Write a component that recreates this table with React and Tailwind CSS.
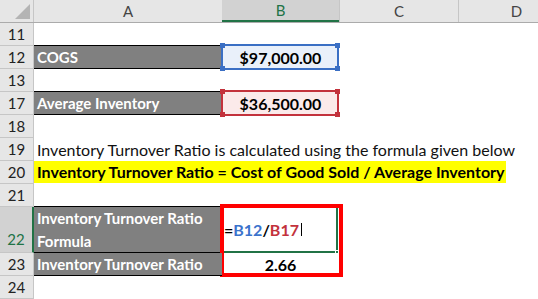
import React from "react";

const GRAY = "bg-[#808080] text-white font-bold";

function Row({ n, tall, active, children }) {
  return (
    <div className={tall ? "flex h-[46px]" : "flex h-[23px]"}>
      <div
        className={
          active
            ? "w-[34px] shrink-0 flex items-end justify-center pb-[1px] bg-[#d2d2d2] border-b border-b-[#c6c6c6] border-r-2 border-r-[#217346] text-[#217346]"
            : "w-[34px] shrink-0 flex items-center justify-center bg-[#e6e6e6] border-b border-r border-[#c6c6c6] text-[#222]"
        }
      >
        {n}
      </div>
      <div className="flex flex-1 relative">{children}</div>
    </div>
  );
}

function Corners({ color }) {
  return (
    <>
      <span className={`absolute -left-[3px] -top-[3px] w-[5px] h-[5px] ${color}`} />
      <span className={`absolute -right-[3px] -top-[3px] w-[5px] h-[5px] ${color}`} />
      <span className={`absolute -left-[3px] -bottom-[3px] w-[5px] h-[5px] ${color}`} />
      <span className={`absolute -right-[3px] -bottom-[3px] w-[5px] h-[5px] ${color}`} />
    </>
  );
}

export default function App() {
  return (
    <div className="w-[538px] h-[299px] overflow-hidden bg-white text-[15px] leading-[23px] font-['Lato','Open_Sans',sans-serif] text-black">
      {/* column headers */}
      <div className="flex h-[23px] bg-[#e6e6e6] border-b border-[#ababab] text-[#444]">
        <div className="w-[34px] shrink-0 relative border-r border-[#c6c6c6]">
          <svg className="absolute left-0 top-0" width="33" height="22" viewBox="0 0 33 22">
            <polygon points="30,4 30,19 15,19" fill="#b4b4b4" />
          </svg>
        </div>
        <div className="w-[188px] shrink-0 flex items-center justify-center">A</div>
        <div className="w-[117px] shrink-0 flex items-center justify-center bg-[#d2d2d2] border-b-2 border-[#217346] text-[#217346]">B</div>
        <div className="w-[120px] shrink-0 flex items-center justify-center border-l border-r border-[#c6c6c6]">C</div>
        <div className="w-[115px] shrink-0 flex items-center justify-center">D</div>
      </div>

      <Row n="11">
        <div className="w-[188px] border-b border-black" />
      </Row>
      <Row n="12">
        <div className={`w-[188px] border-b border-black pl-[3px] ${GRAY}`}>COGS</div>
        <div className="w-[117px] relative flex items-center justify-center text-[16px] font-bold bg-[#e9f0fa]">
          <div className="absolute left-[-1px] top-[-2px] w-[118px] h-[26px] border-2 border-[#3a6fc4]">
            <Corners color="bg-[#3a6fc4]" />
          </div>
          <span className="relative">$97,000.00</span>
        </div>
      </Row>
      <Row n="13">
        <div className="w-[188px] border-b border-black" />
      </Row>
      <Row n="17">
        <div className={`w-[188px] border-b border-black pl-[3px] ${GRAY}`}>Average Inventory</div>
        <div className="w-[117px] relative flex items-center justify-center text-[16px] font-bold bg-[#fbeaea]">
          <div className="absolute left-[-1px] top-[-2px] w-[118px] h-[26px] border-2 border-[#c3323c]">
            <Corners color="bg-[#c3323c]" />
          </div>
          <span className="relative">$36,500.00</span>
        </div>
      </Row>
      <Row n="18" />
      <Row n="19">
        <div className="pl-[3px] whitespace-nowrap text-[16px] text-[#111]">
          Inventory Turnover Ratio is calculated using the formula given below
        </div>
      </Row>
      <Row n="20">
        <div className="w-[472px] h-[22px] pl-[3px] whitespace-nowrap bg-[#ffff00] text-[16px] font-bold leading-[22px]">
          Inventory Turnover Ratio = Cost of Good Sold / Average Inventory
        </div>
      </Row>
      <Row n="21">
        <div className="w-[188px] border-b border-black" />
      </Row>
      <Row n="22" tall active>
        <div className={`w-[188px] border-b border-black pl-[3px] ${GRAY}`}>
          Inventory Turnover Ratio
          <br />
          Formula
        </div>
        <div className="w-[116px] relative flex items-center pl-[2px] text-[16px] font-bold border-r-2 border-b-2 border-[#217346]">
          <span>=</span>
          <span className="text-[#3b73cc]">B12</span>
          <span>/</span>
          <span className="text-[#c3323c]">B17</span>
          <span className="ml-[2px] w-px h-[13px] bg-black" />
          <span className="absolute right-[-3px] bottom-[-3px] w-[4px] h-[4px] bg-[#217346] border border-white" />
          <div className="absolute left-[-2px] top-[-3px] w-[123px] h-[73px] border-4 border-[#ff0000]" />
        </div>
      </Row>
      <Row n="23">
        <div className={`w-[188px] border-b border-black pl-[3px] ${GRAY}`}>Inventory Turnover Ratio</div>
        <div className="w-[117px] flex items-center justify-center text-[16px] font-bold">2.66</div>
      </Row>
      <Row n="24" />
    </div>
  );
}
